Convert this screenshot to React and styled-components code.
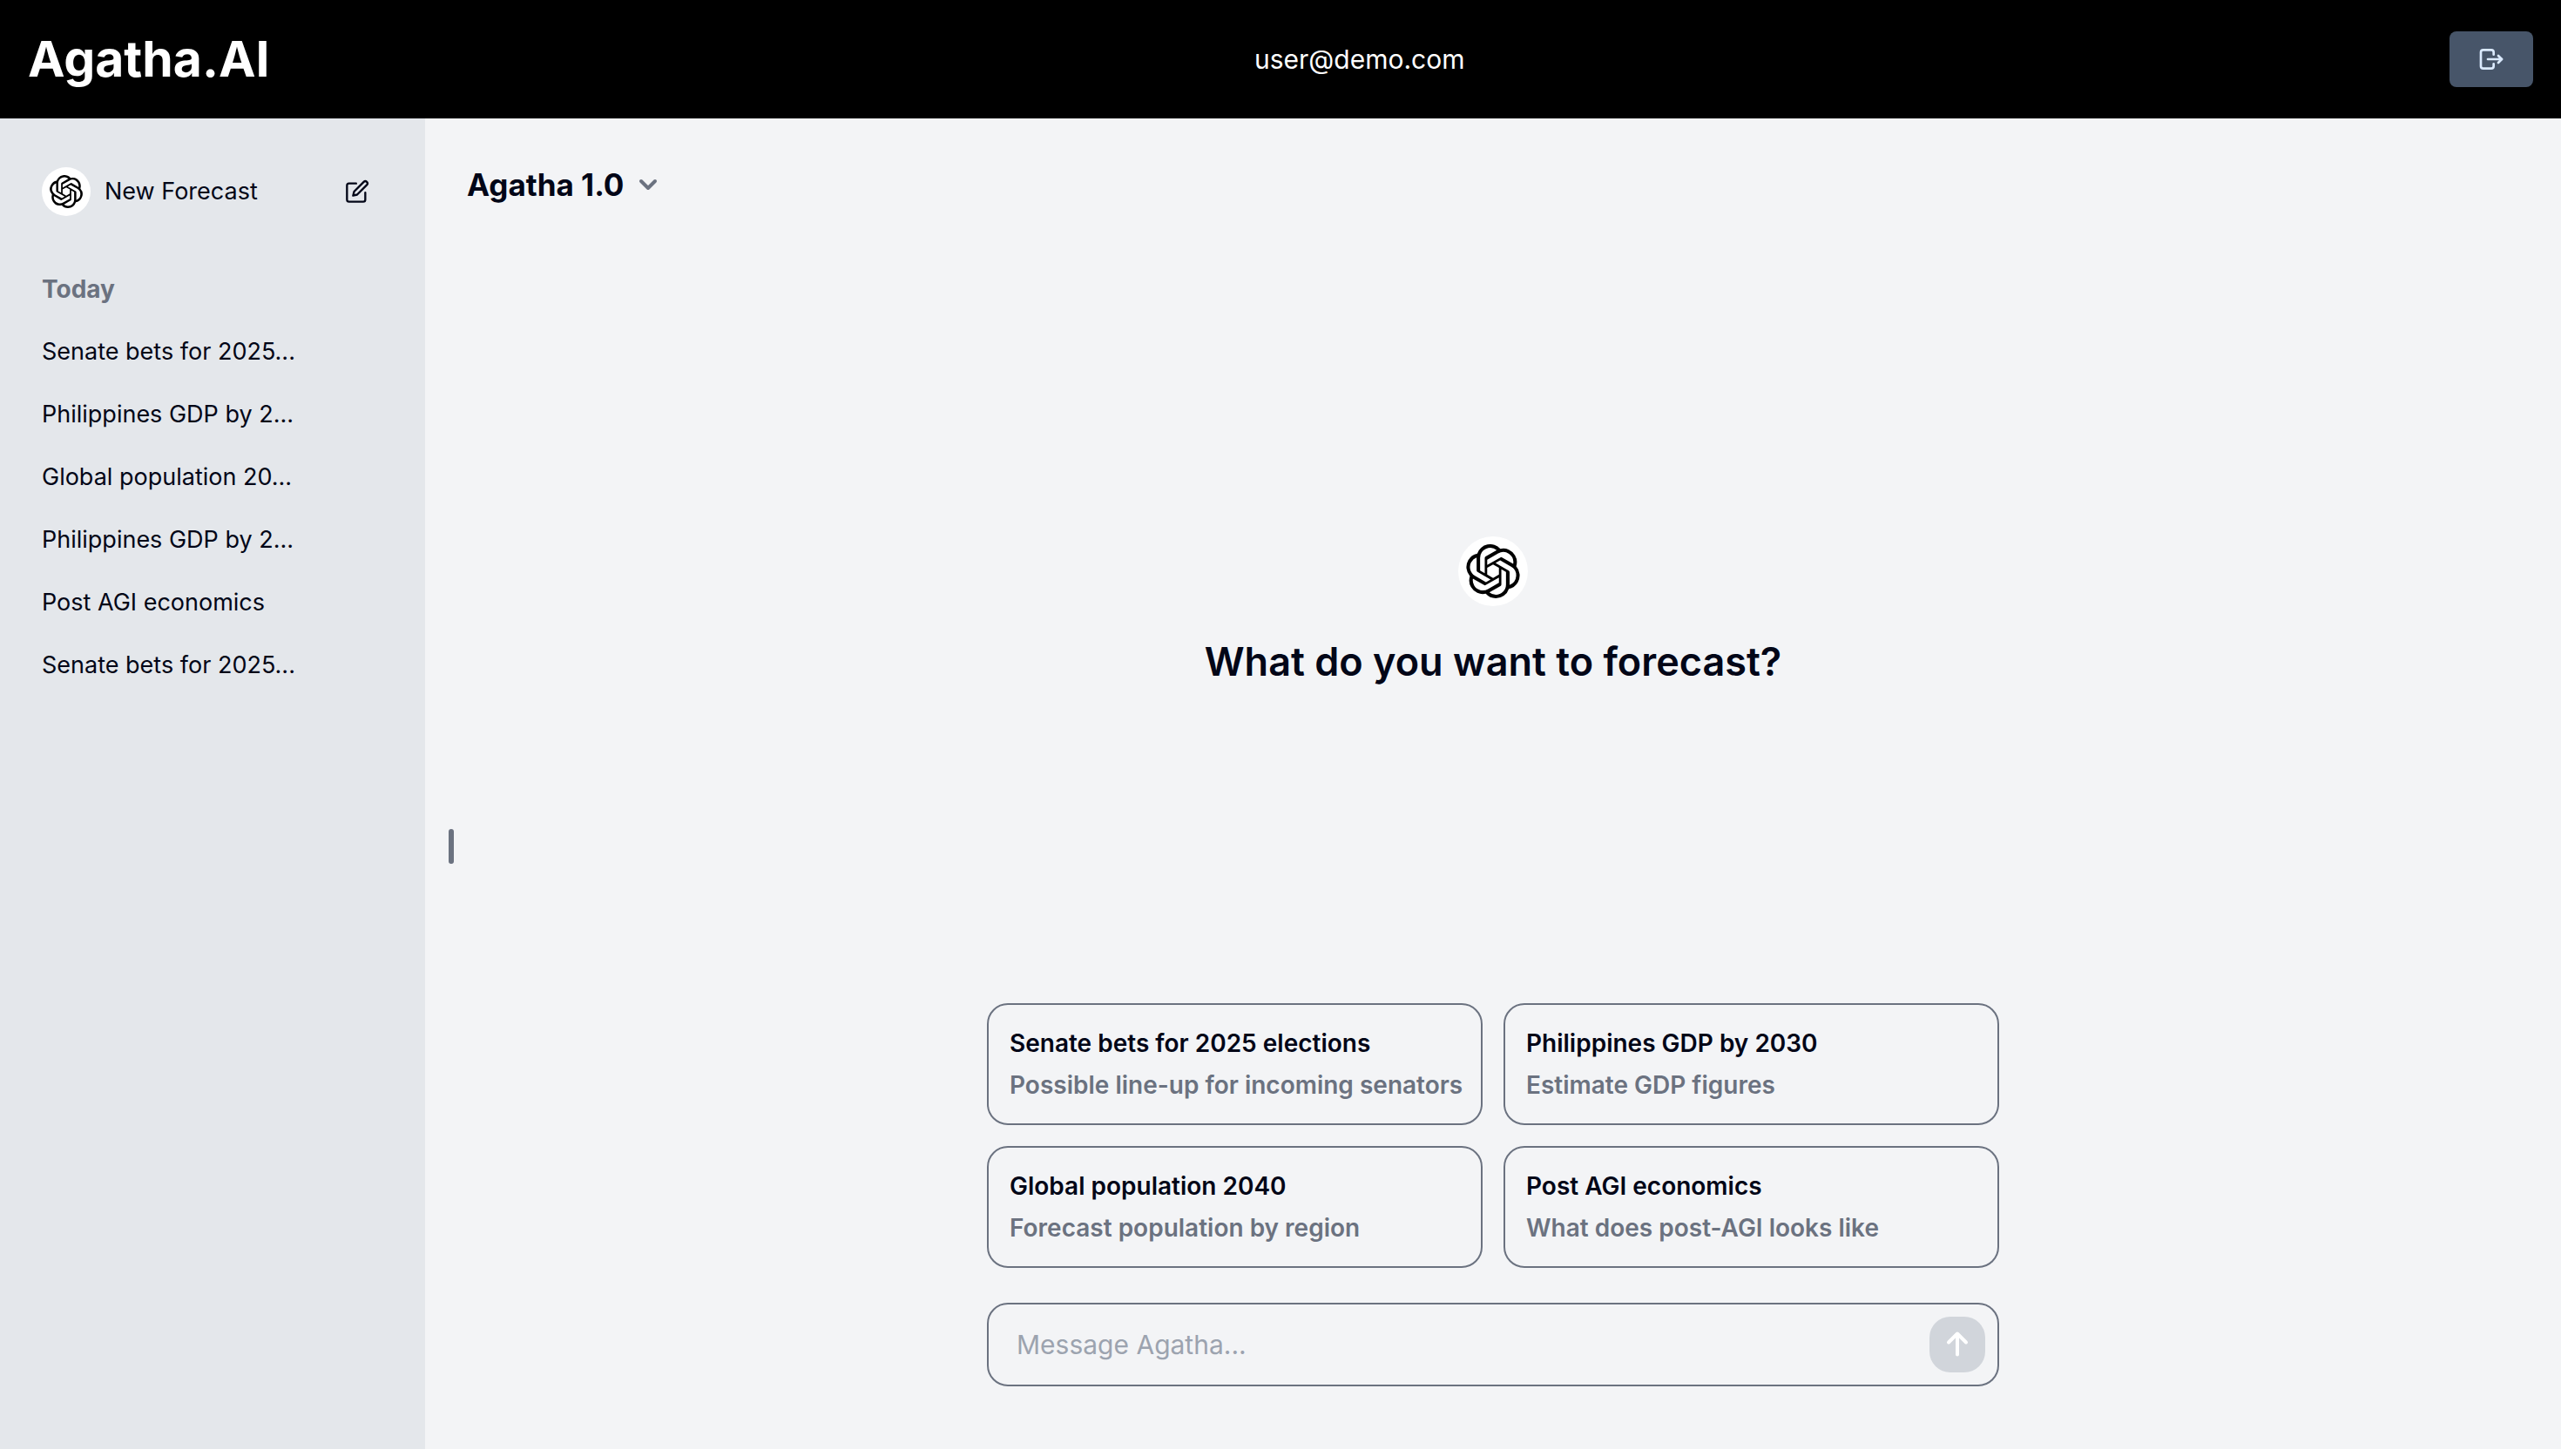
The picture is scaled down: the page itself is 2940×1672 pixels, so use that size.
import React from "react";
import styled, { createGlobalStyle } from "styled-components";
import { TbLogout } from "react-icons/tb";
import { FiChevronDown, FiEdit } from "react-icons/fi";
import { SiOpenai } from "react-icons/si";

const colors = {
  ink: "#020617",
  muted: "#6b7280",
  line: "#6b7280",
  page: "#f3f4f6",
  side: "#e4e7eb",
};

const GlobalStyle = createGlobalStyle`
  *, *::before, *::after { box-sizing: border-box; }
  body {
    margin: 0;
    background: #fff;
    color: ${colors.ink};
    font-family: Inter, "Liberation Sans", sans-serif;
    font-size: 27px;
    line-height: 40px;
  }
  h1, h2, p, ul { margin: 0; padding: 0; }
  button, input { font: inherit; color: inherit; }
  button { border: 0; background: none; padding: 0; cursor: pointer; }
  a { color: inherit; text-decoration: none; }
  svg { display: block; flex-shrink: 0; }
`;

const Page = styled.div`
  display: flex;
  flex-direction: column;
  height: calc(100vh - 8px);
`;

const Header = styled.header`
  display: flex;
  align-items: center;
  justify-content: space-between;
  padding: 32px;
  background: #000;
  color: #fff;
`;

const Brand = styled.h1`
  font-size: 57px;
  line-height: 72px;
  font-weight: 700;
`;

const Account = styled.span`
  font-size: 30px;
  line-height: 48px;
`;

const LogoutButton = styled.button`
  display: grid;
  place-items: center;
  width: 96px;
  height: 64px;
  border-radius: 8px;
  background: #475569;
  color: #dbeafe;
  font-size: 32px;
`;

const Body = styled.div`
  display: flex;
  flex: 1;
  min-height: 0;
`;

const Sidebar = styled.nav`
  flex: 0 0 488px;
  padding: 48px;
  background: ${colors.side};
`;

const NewForecast = styled.button`
  display: flex;
  align-items: center;
  gap: 16px;
  width: 100%;
  height: 72px;
  padding-right: 16px;
  text-align: left;
`;

const NewLabel = styled.span`
  flex: 1;
`;

const Badge = styled.span`
  display: grid;
  place-items: center;
  width: ${(p) => p.$size}px;
  height: ${(p) => p.$size}px;
  border-radius: 50%;
  background: #fff;
  color: #000;
`;

const SectionTitle = styled.h2`
  margin-top: 56px;
  color: ${colors.muted};
  font-size: 28px;
  line-height: 40px;
  font-weight: 700;
`;

const History = styled.ul`
  display: flex;
  flex-direction: column;
  gap: 32px;
  margin-top: 32px;
  list-style: none;
`;

const HistoryLink = styled.a`
  display: block;
`;

const Main = styled.main`
  display: flex;
  flex: 1;
  flex-direction: column;
  position: relative;
  min-width: 0;
  padding: 48px 48px 72px;
  background: ${colors.page};
`;

const SidebarHandle = styled.button`
  position: absolute;
  top: 816px;
  left: 27px;
  width: 6px;
  height: 40px;
  border-radius: 4px;
  background: ${colors.muted};
`;

const ModelButton = styled.button`
  display: flex;
  align-items: center;
  align-self: flex-start;
  gap: 12px;
  font-size: 35px;
  line-height: 56px;
  font-weight: 700;

  svg {
    color: ${colors.muted};
    font-size: 32px;
    stroke-width: 3;
  }
`;

const Hero = styled.section`
  display: flex;
  flex: 1;
  flex-direction: column;
  align-items: center;
  justify-content: center;
  gap: 32px;
  padding-top: 16px;
`;

const Prompt = styled.h2`
  font-size: 45px;
  line-height: 64px;
  font-weight: 600;
`;

const Composer = styled.div`
  display: flex;
  flex-direction: column;
  align-self: center;
  gap: 40px;
  width: 100%;
  max-width: 1162px;
`;

const Suggestions = styled.div`
  display: grid;
  grid-template-columns: repeat(2, minmax(0, 1fr));
  gap: 24px;
`;

const Suggestion = styled.button`
  display: flex;
  flex-direction: column;
  gap: 8px;
  padding: 24px;
  border: 2px solid ${colors.line};
  border-radius: 24px;
  font-size: 28px;
  font-weight: 600;
  text-align: left;
  white-space: nowrap;
`;

const SuggestionDetail = styled.span`
  color: ${colors.muted};
`;

const MessageForm = styled.form`
  display: flex;
  align-items: center;
  padding: 14px;
  border: 2px solid ${colors.line};
  border-radius: 24px;
`;

const MessageInput = styled.input`
  flex: 1;
  min-width: 0;
  padding: 0 18px;
  border: 0;
  outline: 0;
  background: transparent;
  font-size: 30px;
  line-height: 48px;

  &::placeholder { color: #9ca3af; opacity: 1; }
`;

const SendButton = styled.button`
  display: grid;
  place-items: center;
  width: 64px;
  height: 64px;
  border-radius: 24px;
  background: #d1d5db;
  color: #fff;
`;

function ArrowUp() {
  return (
    <svg
      width="32"
      height="32"
      viewBox="0 0 32 32"
      fill="none"
      stroke="currentColor"
      strokeWidth="4"
      strokeLinecap="round"
      strokeLinejoin="round"
    >
      <path d="M6 13.5 16 3.5 26 13.5M16 4v23.5" />
    </svg>
  );
}

const history = [
  "Senate bets for 2025...",
  "Philippines GDP by 2...",
  "Global population 20...",
  "Philippines GDP by 2...",
  "Post AGI economics",
  "Senate bets for 2025...",
];

const suggestions = [
  ["Senate bets for 2025 elections", "Possible line-up for incoming senators"],
  ["Philippines GDP by 2030", "Estimate GDP figures"],
  ["Global population 2040", "Forecast population by region"],
  ["Post AGI economics", "What does post-AGI looks like"],
];

export default function App() {
  return (
    <>
      <GlobalStyle />
      <Page>
        <Header>
          <Brand>Agatha.AI</Brand>
          <Account>user@demo.com</Account>
          <LogoutButton type="button" aria-label="Log out">
            <TbLogout />
          </LogoutButton>
        </Header>
        <Body>
          <Sidebar aria-label="Forecasts">
            <NewForecast type="button">
              <Badge $size={56}>
                <SiOpenai size={38} />
              </Badge>
              <NewLabel>New Forecast</NewLabel>
              <FiEdit size={28} />
            </NewForecast>
            <SectionTitle>Today</SectionTitle>
            <History>
              {history.map((title, i) => (
                <li key={i}>
                  <HistoryLink href="#">{title}</HistoryLink>
                </li>
              ))}
            </History>
          </Sidebar>
          <Main>
            <SidebarHandle type="button" aria-label="Toggle sidebar" />
            <ModelButton type="button">
              Agatha 1.0
              <FiChevronDown />
            </ModelButton>
            <Hero>
              <Badge $size={80}>
                <SiOpenai size={62} />
              </Badge>
              <Prompt>What do you want to forecast?</Prompt>
            </Hero>
            <Composer>
              <Suggestions>
                {suggestions.map(([title, detail]) => (
                  <Suggestion type="button" key={title}>
                    <span>{title}</span>
                    <SuggestionDetail>{detail}</SuggestionDetail>
                  </Suggestion>
                ))}
              </Suggestions>
              <MessageForm onSubmit={(e) => e.preventDefault()}>
                <MessageInput aria-label="Message Agatha" placeholder="Message Agatha..." />
                <SendButton type="submit" aria-label="Send message">
                  <ArrowUp />
                </SendButton>
              </MessageForm>
            </Composer>
          </Main>
        </Body>
      </Page>
    </>
  );
}
